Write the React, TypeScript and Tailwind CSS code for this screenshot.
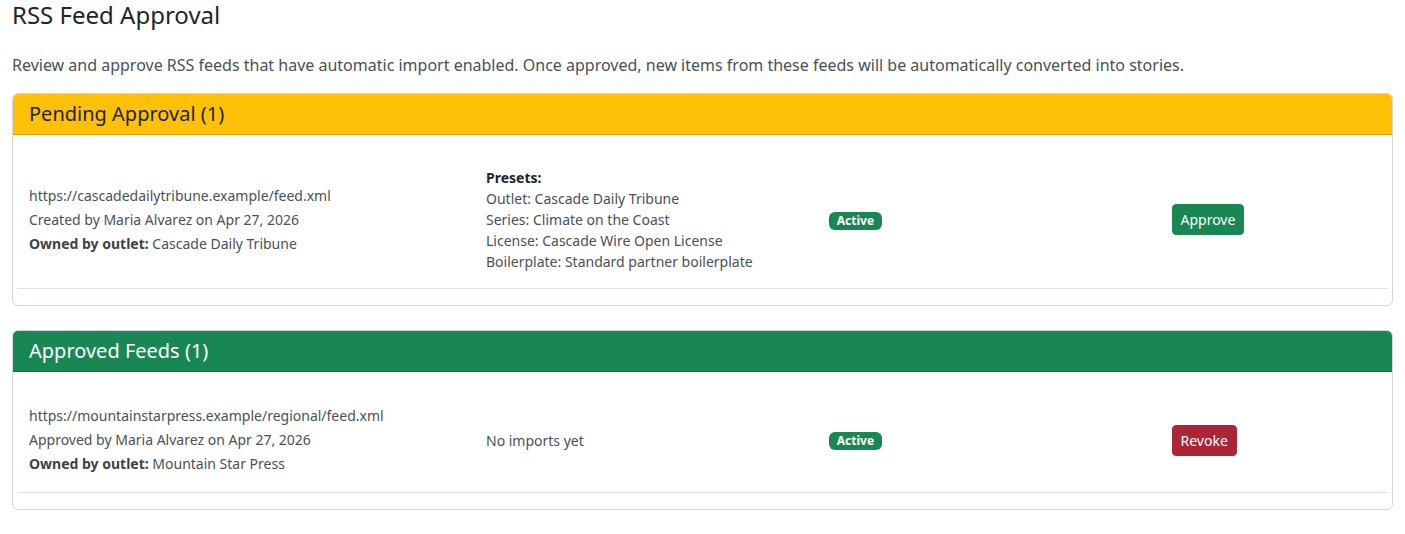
import React from "react"

type Feed = {
  url: string
  byline: string
  outlet: string
  presets?: string[]
  action: "approve" | "revoke"
}

const pending: Feed[] = [
  {
    url: "https://cascadedailytribune.example/feed.xml",
    byline: "Created by Maria Alvarez on Apr 27, 2026",
    outlet: "Cascade Daily Tribune",
    presets: [
      "Outlet: Cascade Daily Tribune",
      "Series: Climate on the Coast",
      "License: Cascade Wire Open License",
      "Boilerplate: Standard partner boilerplate",
    ],
    action: "approve",
  },
]

const approved: Feed[] = [
  {
    url: "https://mountainstarpress.example/regional/feed.xml",
    byline: "Approved by Maria Alvarez on Apr 27, 2026",
    outlet: "Mountain Star Press",
    action: "revoke",
  },
]

function FeedRow({ feed }: { feed: Feed }) {
  return (
    <div className="grid grid-cols-12 items-center border-b border-[#dee2e6] py-4 text-sm text-[#495057]">
      {/* feed info */}
      <div className="col-span-4 px-3 leading-6">
        <div>{feed.url}</div>
        <div>{feed.byline}</div>
        <div>
          <span className="font-bold text-[#3d4247]">Owned by outlet:</span> {feed.outlet}
        </div>
      </div>

      {/* presets or import status */}
      <div className="col-span-3 px-3 leading-[21px]">
        {feed.presets ? (
          <>
            <div className="font-bold text-[#212529]">Presets:</div>
            {feed.presets.map((p) => (
              <div key={p}>{p}</div>
            ))}
          </>
        ) : (
          <div>No imports yet</div>
        )}
      </div>

      <div className="col-span-3 px-3">
        <span className="inline-block rounded-[6px] bg-[#198754] px-[8px] py-[3px] text-xs leading-none font-bold text-white">
          Active
        </span>
      </div>

      <div className="col-span-2 px-3">
        {feed.action === "approve" ? (
          <button className="rounded-[4px] border border-[#198754] bg-[#198754] px-2 py-1 text-sm leading-[21px] text-white">
            Approve
          </button>
        ) : (
          <button className="rounded-[4px] border border-[#ab2537] bg-[#ab2537] px-2 py-1 text-sm leading-[21px] text-white">
            Revoke
          </button>
        )}
      </div>
    </div>
  )
}

function FeedCard({
  title,
  feeds,
  tone,
}: {
  title: string
  feeds: Feed[]
  tone: "warning" | "success"
}) {
  const header =
    tone === "warning"
      ? "bg-[#ffc107] text-[#212529] border-[#d9a406]"
      : "bg-[#198754] text-white border-[#146c43]"

  return (
    <div className="mb-6 overflow-hidden rounded-[6px] border border-[#d3d6da] bg-white">
      <div className={`border-b px-4 py-2 text-xl leading-6 ${header}`}>{title}</div>
      <div className="px-1 pt-4 pb-4">
        {feeds.map((f) => (
          <FeedRow key={f.url} feed={f} />
        ))}
      </div>
    </div>
  )
}

export default function App() {
  return (
    <div
      className="min-h-screen bg-white px-3 text-[#212529]"
      style={{ fontFamily: '"Noto Sans", "Open Sans", sans-serif' }}
    >
      <h4 className="mb-6 text-2xl leading-[29px] font-normal">RSS Feed Approval</h4>
      <p className="mb-4 text-base leading-6 text-[#495057]">
        Review and approve RSS feeds that have automatic import enabled. Once approved, new items from
        these feeds will be automatically converted into stories.
      </p>

      <FeedCard title="Pending Approval (1)" feeds={pending} tone="warning" />
      <FeedCard title="Approved Feeds (1)" feeds={approved} tone="success" />
    </div>
  )
}
